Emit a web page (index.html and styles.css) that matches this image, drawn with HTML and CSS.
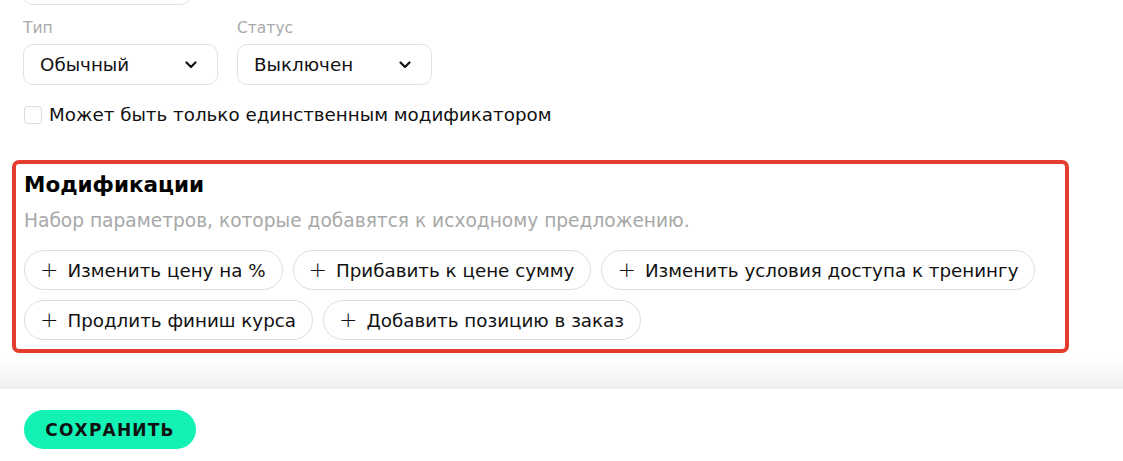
FILE: index.html
```html
<!DOCTYPE html>
<html lang="ru">
<head>
    <meta charset="UTF-8">
    <meta name="viewport" content="width=device-width, initial-scale=1.0">
    <title>Модификатор</title>
    <link rel="stylesheet" href="styles.css">
</head>
<body>
    <div class="page">
        <div class="input-stub"></div>

        <div class="fields-row">
            <div class="field">
                <div class="field-label">Тип</div>
                <div class="select">
                    <span>Обычный</span>
                    <svg class="chevron" width="12" height="8" viewBox="0 0 12 8"><path d="M1.5 1.5 L6 6 L10.5 1.5" fill="none" stroke="#111" stroke-width="2.2" stroke-linecap="round" stroke-linejoin="round"/></svg>
                </div>
            </div>
            <div class="field">
                <div class="field-label">Статус</div>
                <div class="select">
                    <span>Выключен</span>
                    <svg class="chevron" width="12" height="8" viewBox="0 0 12 8"><path d="M1.5 1.5 L6 6 L10.5 1.5" fill="none" stroke="#111" stroke-width="2.2" stroke-linecap="round" stroke-linejoin="round"/></svg>
                </div>
            </div>
        </div>

        <label class="checkbox-row">
            <span class="checkbox"></span>
            <span>Может быть только единственным модификатором</span>
        </label>

        <!-- блок модификаций -->
        <section class="mods">
            <h2 class="mods-title">Модификации</h2>
            <p class="mods-hint">Набор параметров, которые добавятся к исходному предложению.</p>
            <div class="chips">
                <button class="chip"><span class="plus">+</span>Изменить цену на %</button>
                <button class="chip"><span class="plus">+</span>Прибавить к цене сумму</button>
                <button class="chip"><span class="plus">+</span>Изменить условия доступа к тренингу</button>
                <button class="chip"><span class="plus">+</span>Продлить финиш курса</button>
                <button class="chip"><span class="plus">+</span>Добавить позицию в заказ</button>
            </div>
        </section>
    </div>

    <div class="footer-shade"></div>
    <footer class="footer">
        <button class="save-button">Сохранить</button>
    </footer>
</body>
</html>
```

FILE: styles.css
```css
body {
    margin: 0;
    padding: 0;
    font-family: "DejaVu Sans", Arial, sans-serif;
    color: #111;
    background: #fff;
    overflow: hidden;
}

.page {
    padding: 0 54px 0 12px;
}

.input-stub {
    width: 166px;
    height: 40px;
    margin: -37px 0 0 11px;
    border: 1px solid #e2e2e2;
    border-radius: 10px;
}

.fields-row {
    display: flex;
    gap: 19px;
    margin: 13px 0 0 11px;
}

.field-label {
    font-size: 15.5px;
    line-height: 20px;
    color: #aaaaaa;
    margin-bottom: 6px;
}

.select {
    width: 195px;
    height: 41px;
    box-sizing: border-box;
    border: 1px solid #e2e2e2;
    border-radius: 10px;
    padding: 0 20px 0 16px;
    display: flex;
    align-items: center;
    justify-content: space-between;
    font-size: 18.3px;
}

.checkbox-row {
    display: flex;
    align-items: center;
    gap: 7px;
    margin: 19px 0 0 12px;
    font-size: 18.3px;
    line-height: 22px;
}

.checkbox {
    width: 18px;
    height: 18px;
    box-sizing: border-box;
    border: 1px solid #dcdcdc;
    border-radius: 4px;
}

/* красная рамка вокруг модификаций */
.mods {
    margin-top: 34px;
    border: 4px solid #e43d30;
    border-radius: 7px;
    padding: 7px 8px 9px 8px;
}

.mods-title {
    margin: 0;
    font-size: 21.5px;
    line-height: 28px;
    font-weight: 700;
    color: #000;
}

.mods-hint {
    margin: 10px 0 0 0;
    font-size: 18.6px;
    line-height: 24px;
    color: #a8a8a8;
}

.chips {
    display: flex;
    flex-wrap: wrap;
    gap: 10px;
    margin-top: 17px;
}

.chip {
    height: 40px;
    box-sizing: border-box;
    border: 1px solid #dedede;
    border-radius: 20px;
    background: #fff;
    padding: 0 16px 0 15px;
    display: flex;
    align-items: center;
    font-family: inherit;
    font-size: 18.3px;
    color: #111;
    cursor: pointer;
}

.plus {
    font-size: 22px;
    font-weight: 300;
    margin-right: 9px;
    line-height: 1;
}

.footer-shade {
    height: 31px;
    margin-top: 5px;
    background: linear-gradient(to bottom, #ffffff, #eff0f0);
}

.footer {
    padding: 21px 24px 0 24px;
    height: 72px;
    box-sizing: border-box;
}

.save-button {
    width: 172px;
    height: 39px;
    border: none;
    border-radius: 20px;
    background-color: #12f2b4;
    font-family: inherit;
    font-size: 17px;
    font-weight: 700;
    letter-spacing: 1.2px;
    text-transform: uppercase;
    color: #111;
    cursor: pointer;
}
```
